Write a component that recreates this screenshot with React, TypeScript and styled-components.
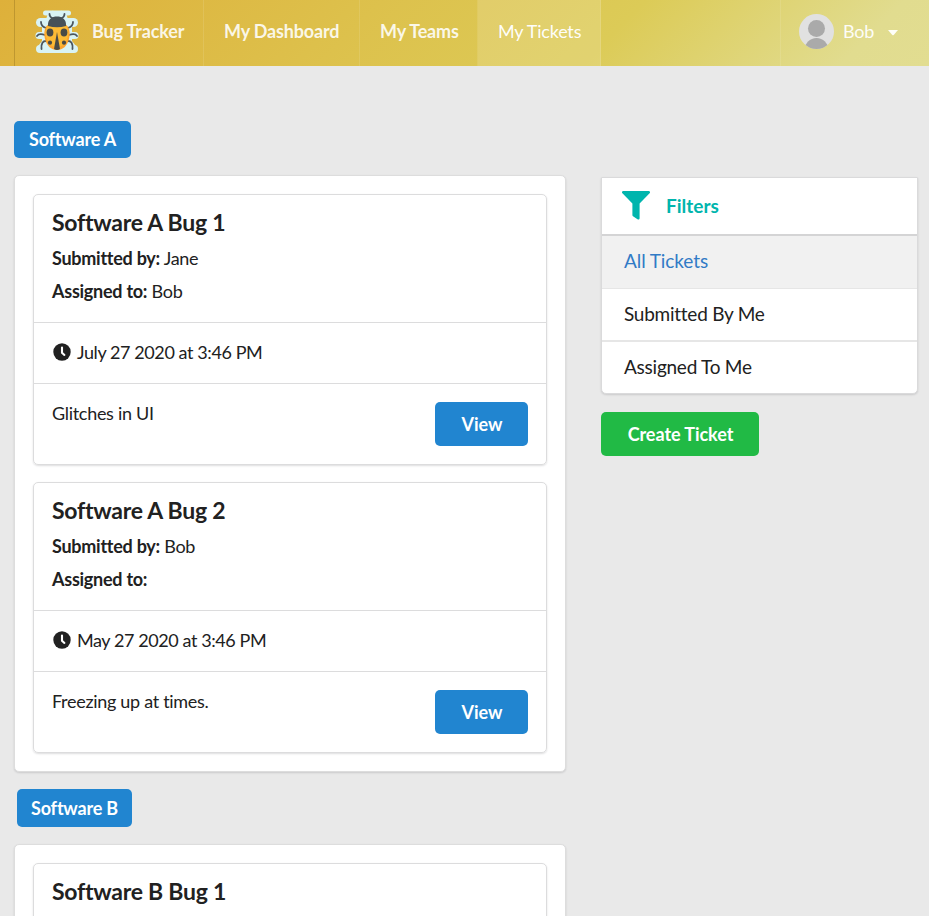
import React from "react";
import styled, { createGlobalStyle } from "styled-components";

const GlobalStyle = createGlobalStyle`
  *, *::before, *::after { box-sizing: border-box; }
  html, body { margin: 0; height: 916px; overflow: hidden; background: #e9e9e9; }
  body {
    font: 400 18px/26px Lato, "Liberation Sans", sans-serif;
    font-variant-ligatures: none;
    color: #212121;
  }
  button { font: inherit; border: 0; padding: 0; cursor: pointer; }
`;

const Page = styled.div`
  height: 916px;
  overflow: hidden;
`;

const NavBar = styled.nav`
  display: flex;
  height: 66px;
  padding-left: 14px;
  background: linear-gradient(135deg, #deb03a 0%, #ddc04b 36%, #dccb57 65%, #e1dc8f 91%, #e2dd91 100%);
`;

const NavItem = styled.a<{ $width: number; $active?: boolean; $brand?: boolean }>`
  display: flex;
  align-items: center;
  width: ${(p) => p.$width}px;
  padding: 0 0 4px 20px;
  border-left: ${(p) => (p.$brand ? "1px solid rgba(120, 90, 20, 0.3)" : "0")};
  border-right: 1px solid rgba(255, 255, 255, 0.1);
  background: ${(p) => (p.$active ? "rgba(255, 255, 255, 0.15)" : "transparent")};
  color: ${(p) => (p.$active ? "rgba(255, 255, 255, 0.97)" : "rgba(255, 255, 255, 0.88)")};
  font-weight: ${(p) => (p.$active ? 400 : 700)};
  letter-spacing: ${(p) => (p.$active ? "-0.2px" : "-0.17px")};
  white-space: nowrap;
`;

const Brand = styled.span`
  margin-left: 13px;
`;

const Account = styled.div`
  display: flex;
  align-items: center;
  width: 149px;
  margin-left: auto;
  padding: 0 0 4px 18px;
  border-left: 1px solid rgba(255, 255, 255, 0.1);
  color: rgba(255, 255, 255, 0.95);
`;

const AccountName = styled.span`
  margin: 0 14px 0 9px;
  letter-spacing: -0.2px;
`;

const Caret = styled.svg`
  margin-top: 4px;
`;

const Columns = styled.main`
  display: grid;
  grid-template-columns: 552px 317px;
  column-gap: 35px;
  padding: 55px 0 0 14px;
`;

const TeamLabel = styled.div<{ $second?: boolean }>`
  display: flex;
  align-items: center;
  justify-content: center;
  width: ${(p) => (p.$second ? 115 : 117)}px;
  height: ${(p) => (p.$second ? 38 : 37)}px;
  margin: ${(p) => (p.$second ? "17px 0 17px 3px" : "0 0 17px")};
  padding-bottom: 1px;
  border-radius: 5px;
  background: #2185d0;
  color: #fff;
  font-weight: 700;
  letter-spacing: -0.2px;
`;

const Segment = styled.section`
  display: flex;
  flex-direction: column;
  gap: 17px;
  padding: 18px;
  border: 1px solid #dddddd;
  border-radius: 5px;
  background: #fff;
  box-shadow: 0 1px 2px rgba(34, 36, 38, 0.15);
`;

const Card = styled.article`
  height: 271px;
  border: 1px solid #dcdcdd;
  border-radius: 5px;
  box-shadow: 0 1px 2px rgba(34, 36, 38, 0.15);
`;

const CardHead = styled.header`
  height: 128px;
  padding: 13px 18px 0;
  border-bottom: 1px solid #dcdcdd;
`;

const Title = styled.h3`
  margin: 0 0 8px;
  font-size: 23px;
  line-height: 28px;
  font-weight: 700;
  letter-spacing: -0.26px;
`;

const Meta = styled.div`
  height: 26px;
  margin-bottom: 7px;
  line-height: 28px;
  letter-spacing: -0.3px;

  b {
    font-weight: 700;
    letter-spacing: -0.26px;
  }
`;

const DateRow = styled.div`
  display: flex;
  align-items: center;
  gap: 6px;
  height: 61px;
  padding: 0 19px 2px;
  border-bottom: 1px solid #dcdcdd;
  letter-spacing: -0.41px;
`;

const CardBody = styled.div`
  display: flex;
  justify-content: space-between;
  align-items: flex-start;
  padding: 18px;
`;

const Description = styled.p`
  margin: -2px 0 0;
  letter-spacing: -0.3px;
`;

const Button = styled.button<{ $green?: boolean }>`
  width: ${(p) => (p.$green ? 158 : 93)}px;
  height: 44px;
  padding: 0 0 1px 1px;
  border-radius: 5px;
  background: ${(p) => (p.$green ? "#21ba45" : "#2185d0")};
  color: #fff;
  font-weight: 700;
  letter-spacing: -0.05px;
`;

const Sidebar = styled.aside`
  padding-top: 56px;
`;

const FilterPanel = styled.section`
  height: 217px;
  margin-bottom: 18px;
  border: 1px solid #dadadb;
  border-radius: 1px 1px 5px 5px;
  background: #fff;
  box-shadow: 0 1px 2px rgba(34, 36, 38, 0.15);
  font-size: 19px;
`;

const FilterTitle = styled.h4`
  display: flex;
  align-items: center;
  gap: 16px;
  height: 58px;
  margin: 0;
  padding: 0 0 1px 20px;
  border-bottom: 2px solid #d4d4d5;
  color: #00b5ad;
  font-size: 19px;
  font-weight: 700;
`;

const FilterItem = styled.a<{ $active?: boolean; $height: number; $rule: number }>`
  display: flex;
  align-items: center;
  height: ${(p) => p.$height}px;
  padding: 0 0 2px 22px;
  border-bottom: ${(p) => p.$rule}px solid #e6e6e6;
  background: ${(p) => (p.$active ? "#f1f1f1" : "transparent")};
  color: ${(p) => (p.$active ? "#317bc6" : "#212121")};
  letter-spacing: ${(p) => (p.$active ? "-0.08px" : "-0.25px")};
`;

const BugLogo = () => (
  <svg width="44" height="45" viewBox="0 0 44 45">
    <g fill="none" stroke="#d9f3f5" strokeLinecap="round" strokeLinejoin="round">
      <path d="M10.5 4H33.5" strokeWidth="5" />
      <path d="M5.5 13.5H38.5" strokeWidth="9" />
      <path d="M4 26.5H40" strokeWidth="7" />
      <path d="M5 40H39" strokeWidth="8" />
      <path d="M18 5L10 19L10 33L6 38M26 5L34 19L34 33L38 38" strokeWidth="6" />
    </g>
    <path d="M13 4H31L36 20L35 40H9L8 20Z" fill="#d9f3f5" />
    <g fill="none" stroke="#4b565f" strokeWidth="1.8" strokeLinecap="round">
      <path d="M14.5 5C14.5 8 16 9 19 9.5M29.5 5C29.5 8 28 9 25 9.5M6 13C6 17 8 18 11 19M38 13C38 17 36 18 33 19M2 27C4 24 7 25 10 26M42 27C40 24 37 25 34 26M6.5 40C6 34 8 32 11 32M37.5 40C38 34 36 32 33 32" />
    </g>
    <path d="M22 13C34 13 36 22 34 30C32 37 28 41 22 41S12 37 10 30C8 22 10 13 22 13Z" fill="#fda52e" />
    <path d="M22 14C33 14 34.5 22 32.5 29C31 35 27 38 22 38S13 35 11.5 29C9.5 22 11 14 22 14Z" fill="#fdbb35" />
    <path d="M13 17C12.5 10 17 7.5 22 7.5S31.5 10 31 17Q22 19.5 13 17Z" fill="#475158" />
    <g fill="#4a4b46">
      <path d="M22 23L25 40Q22 42 19 40Z" />
      <ellipse cx="15" cy="23.5" rx="3.4" ry="4" />
      <ellipse cx="29" cy="23.5" rx="3.4" ry="4" />
      <circle cx="15" cy="33.7" r="2.1" />
      <circle cx="29" cy="33.7" r="2.1" />
    </g>
  </svg>
);

const Avatar = () => (
  <svg width="35" height="35" viewBox="0 0 35 35">
    <defs><clipPath id="avatar-circle"><circle cx="17.5" cy="17.5" r="17.5" /></clipPath></defs>
    <g clipPath="url(#avatar-circle)">
      <path fill="#e1e1e1" d="M0 0H35V35H0Z" />
      <circle cx="17.5" cy="14.5" r="8.5" fill="#aaa" />
      <circle cx="17.5" cy="36" r="12" fill="#aaa" />
    </g>
  </svg>
);

const Clock = () => (
  <svg width="18" height="18" viewBox="0 0 18 18">
    <circle cx="9" cy="9" r="8.7" fill="#212121" />
    <path d="M9 4.5V9.7L11.4 11.9" fill="none" stroke="#fff" strokeWidth="2.1" strokeLinecap="round" />
  </svg>
);

const Funnel = () => (
  <svg width="28" height="29" viewBox="0 0 28 29">
    <path fill="#00b5ad" d="M1.3 0H26.7C28 0 28.5 1.4 27.6 2.3L17.6 12.4V27.2C17.6 28.4 16.4 28.8 15.5 28.2L11 25.2C10.6 24.9 10.4 24.5 10.4 24V12.4L.4 2.3C-.5 1.4 0 0 1.3 0Z" />
  </svg>
);

type Details = { submitter: string; assignee?: string; date: string; description: string };

const Ticket = ({ title, details }: { title: string; details?: Details }) => (
  <Card>
    <CardHead>
      <Title>{title}</Title>
      {details && (
        <>
          <Meta><b>Submitted by:</b> {details.submitter}</Meta>
          <Meta><b>Assigned to:</b> {details.assignee}</Meta>
        </>
      )}
    </CardHead>
    {details && (
      <>
        <DateRow><Clock /><span>{details.date}</span></DateRow>
        <CardBody>
          <Description>{details.description}</Description>
          <Button>View</Button>
        </CardBody>
      </>
    )}
  </Card>
);

export default function App() {
  return (
    <Page>
      <GlobalStyle />
      <NavBar>
        <NavItem $width={190} $brand><BugLogo /><Brand>Bug Tracker</Brand></NavItem>
        <NavItem $width={156}>My Dashboard</NavItem>
        <NavItem $width={118}>My Teams</NavItem>
        <NavItem $width={123} $active>My Tickets</NavItem>
        <Account>
          <Avatar />
          <AccountName>Bob</AccountName>
          <Caret width="10" height="6" viewBox="0 0 10 6"><path fill="currentColor" d="M0 0H10L5.7 5Q5 5.7 4.3 5Z" /></Caret>
        </Account>
      </NavBar>
      <Columns>
        <div>
          <TeamLabel>Software A</TeamLabel>
          <Segment>
            <Ticket
              title="Software A Bug 1"
              details={{ submitter: "Jane", assignee: "Bob", date: "July 27 2020 at 3:46 PM", description: "Glitches in UI" }}
            />
            <Ticket
              title="Software A Bug 2"
              details={{ submitter: "Bob", date: "May 27 2020 at 3:46 PM", description: "Freezing up at times." }}
            />
          </Segment>
          <TeamLabel $second>Software B</TeamLabel>
          <Segment>
            <Ticket title="Software B Bug 1" />
          </Segment>
        </div>
        <Sidebar>
          <FilterPanel>
            <FilterTitle><Funnel /><span>Filters</span></FilterTitle>
            <FilterItem $active $height={53} $rule={1}>All Tickets</FilterItem>
            <FilterItem $height={53} $rule={2}>Submitted By Me</FilterItem>
            <FilterItem $height={51} $rule={0}>Assigned To Me</FilterItem>
          </FilterPanel>
          <Button $green>Create Ticket</Button>
        </Sidebar>
      </Columns>
    </Page>
  );
}
